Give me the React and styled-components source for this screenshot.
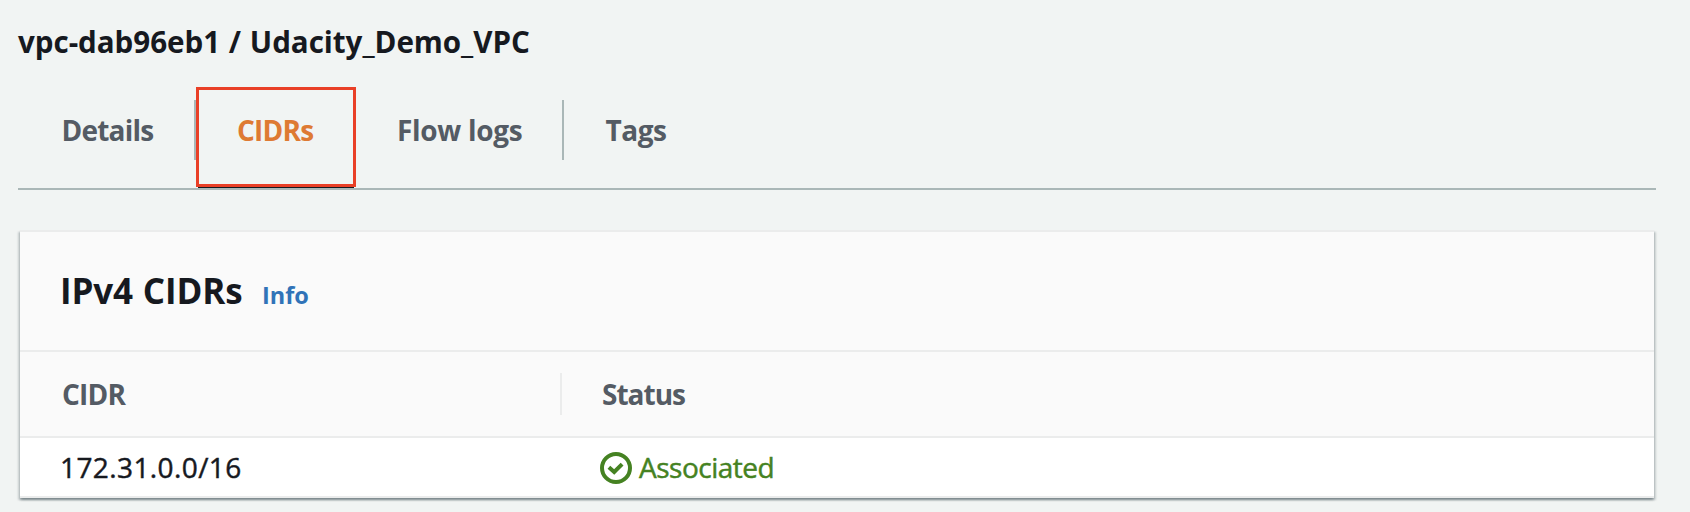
import React from 'react';
import styled, { createGlobalStyle } from 'styled-components';

const GlobalStyle = createGlobalStyle`
  * { box-sizing: border-box; }
  body {
    margin: 0;
    background: #f1f4f3;
    color: #16191f;
    font-family: "Open Sans", "Noto Sans", sans-serif;
  }
`;

const Page = styled.main`
  height: 512px;
  padding: 22px 34px 0 18px;
  overflow: hidden;
`;

const Title = styled.h1`
  margin: 0 0 38px;
  font-size: 29.6px;
  line-height: 40px;
  font-weight: 700;
  letter-spacing: -0.05px;
  word-spacing: 1.2px;
  white-space: nowrap;
`;

const TabList = styled.nav`
  display: flex;
  height: 90px;
  border-bottom: 2px solid #aab7b7;
`;

const Tab = styled.a`
  position: relative;
  flex: none;
  width: ${(p) => p.$width}px;
  height: 60px;
  padding-left: ${(p) => p.$indent}px;
  border-right: ${(p) => (p.$last ? 0 : 2)}px solid #aab7b7;
  color: ${(p) => (p.$active ? '#de7a33' : '#545b64')};
  font-size: 28px;
  line-height: 60px;
  font-weight: 700;
  letter-spacing: ${(p) => p.$tracking}px;
  white-space: nowrap;
`;

const ActiveBar = styled.span`
  position: absolute;
  left: 2px;
  top: 84px;
  width: 156px;
  height: 4px;
  background: #16191f;
`;

const Highlight = styled.span`
  position: absolute;
  left: 0;
  top: -13px;
  width: 160px;
  height: 100px;
  border: 3px solid #e93f26;
`;

const Card = styled.section`
  width: 1634px;
  margin: 40px 0 0 2px;
  border-top: 2px solid #ebecec;
  background: #fff;
  box-shadow:
    0 2px 2px rgba(0, 28, 36, 0.3),
    2px 2px 2px rgba(0, 28, 36, 0.15),
    -2px 2px 2px rgba(0, 28, 36, 0.15);
`;

const CardHeader = styled.header`
  display: flex;
  align-items: baseline;
  height: 120px;
  padding-left: 40px;
  border-bottom: 2px solid #ebecec;
  background: #fafafa;
`;

const CardTitle = styled.h2`
  width: 202px;
  margin: 0;
  font-size: 35px;
  line-height: 118px;
  font-weight: 700;
  letter-spacing: -0.15px;
  word-spacing: 1px;
  white-space: nowrap;
`;

const InfoLink = styled.a`
  color: #3073b8;
  font-size: 23.5px;
  font-weight: 700;
`;

const Row = styled.div`
  display: grid;
  grid-template-columns: 542px 1fr;
  border-bottom: 2px solid #ebecec;
`;

const HeadRow = styled(Row)`
  height: 86px;
  align-items: center;
  background: #fafafa;
  color: #545b64;
  font-size: 28px;
  font-weight: 700;
`;

const HeadCell = styled.div`
  height: 42px;
  line-height: 42px;
  padding-left: ${(p) => p.$indent}px;
  border-right: ${(p) => (p.$divided ? 2 : 0)}px solid #ebecec;
  letter-spacing: ${(p) => p.$tracking}px;
`;

const BodyRow = styled(Row)`
  height: 60px;
  font-size: 28px;
  line-height: 58px;
  -webkit-text-stroke: 0.45px currentColor;
`;

const AddressCell = styled.div`
  padding-left: 40px;
  letter-spacing: 0.4px;
`;

const StatusCell = styled.div`
  display: flex;
  align-items: center;
  gap: 7px;
  padding-left: 38px;
  color: #458222;
  letter-spacing: -0.5px;

  svg { margin-top: 2px; }
`;

const CheckIcon = () => (
  <svg width="32" height="32" viewBox="0 0 32 32" fill="none" stroke="currentColor" strokeWidth="4">
    <circle cx="16" cy="16" r="14" />
    <path d="M8.9 15.2l5.3 4.8 7.9-7.8" />
  </svg>
);

export default function App() {
  return (
    <Page>
      <GlobalStyle />
      <Title>vpc-dab96eb1 / Udacity_Demo_VPC</Title>
      <TabList>
        <Tab $width={178} $indent={43.5} $tracking={-0.8}>Details</Tab>
        <Tab $width={160} $indent={41} $tracking={-0.75} $active>
          CIDRs
          <ActiveBar />
          <Highlight />
        </Tab>
        <Tab $width={208} $indent={41} $tracking={-0.3}>Flow logs</Tab>
        <Tab $width={144} $indent={41.5} $tracking={-0.5} $last>Tags</Tab>
      </TabList>
      <Card>
        <CardHeader>
          <CardTitle>IPv4 CIDRs</CardTitle>
          <InfoLink>Info</InfoLink>
        </CardHeader>
        <HeadRow>
          <HeadCell $indent={42} $tracking={-0.8} $divided>CIDR</HeadCell>
          <HeadCell $indent={40} $tracking={-1}>Status</HeadCell>
        </HeadRow>
        <BodyRow>
          <AddressCell>172.31.0.0/16</AddressCell>
          <StatusCell>
            <CheckIcon />
            <span>Associated</span>
          </StatusCell>
        </BodyRow>
      </Card>
    </Page>
  );
}
